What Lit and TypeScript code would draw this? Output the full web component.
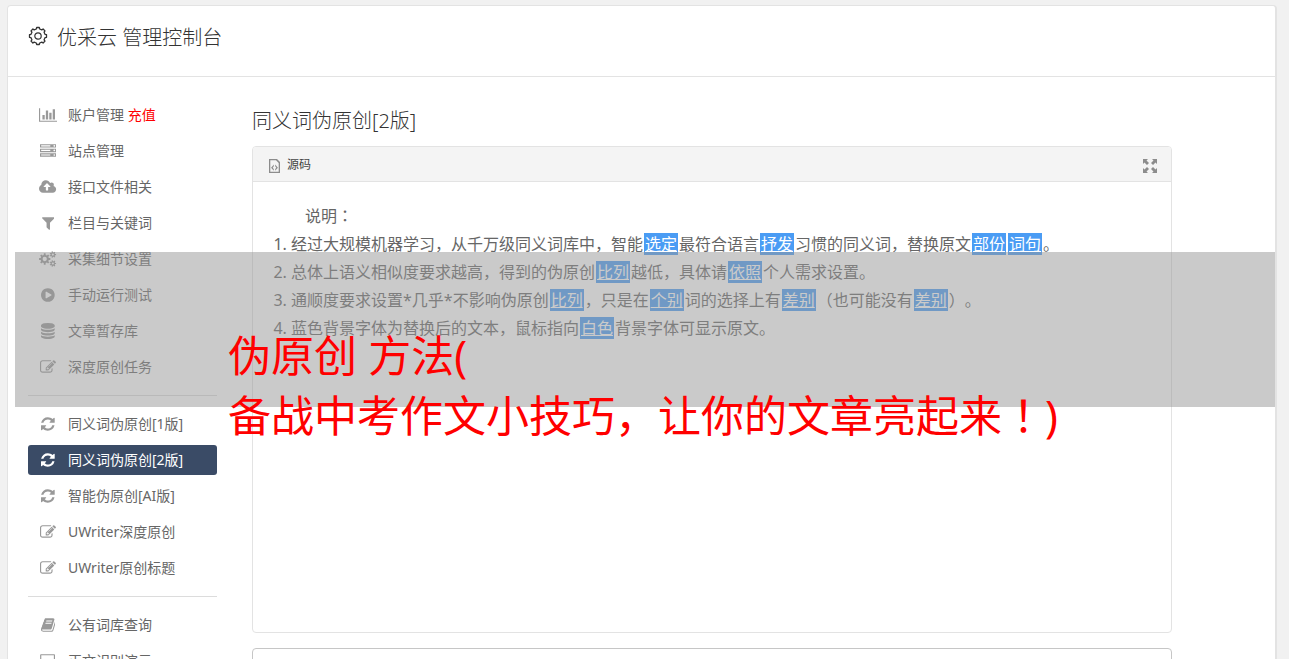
import { LitElement, html, css, svg, nothing } from "lit";
import { customElement, property, state } from "lit/decorators.js";
import { classMap } from "lit/directives/class-map.js";

/** Outline of a cog wheel centred on (cx, cy). */
function cog(cx: number, cy: number, outer: number, inner: number, teeth: number): string {
  const step = (Math.PI * 2) / teeth;
  const point = (r: number, a: number) =>
    `${(cx + r * Math.cos(a)).toFixed(1)} ${(cy + r * Math.sin(a)).toFixed(1)}`;
  const parts: string[] = [];
  for (let i = 0; i < teeth; i++) {
    const a = i * step;
    parts.push(
      point(inner, a - step * 0.3),
      point(outer, a - step * 0.2),
      point(outer, a + step * 0.2),
      point(inner, a + step * 0.3),
    );
  }
  return `M${parts.join("L")}Z`;
}

function disc(cx: number, cy: number, r: number): string {
  return `M${cx - r} ${cy}a${r} ${r} 0 1 0 ${2 * r} 0a${r} ${r} 0 1 0 ${-2 * r} 0z`;
}

const ICONS: Record<string, { x?: number; w: number; d: string }> = {
  chart: {
    w: 2048,
    d: "M640 896v512H384V896h256zm384-512v1024H768V384h256zm1024 1152v128H0V128h128v1408h1920zm-640-896v768h-256V640h256zm384-384v1152h-256V256h256z",
  },
  server: {
    w: 1792,
    d: "M128 1408h1024v-128H128v128zm0-512h1024V768H128v128zm1568 448q0-40-28-68t-68-28-68 28-28 68 28 68 68 28 68-28 28-68zM128 384h1024V256H128v128zm1568 448q0-40-28-68t-68-28-68 28-28 68 28 68 68 28 68-28 28-68zm0-512q0-40-28-68t-68-28-68 28-28 68 28 68 68 28 68-28 28-68zm96 832v384H0v-384h1792zm0-512v384H0V640h1792zm0-512v384H0V128h1792z",
  },
  cloud: {
    x: -64,
    w: 1920,
    d: "M1216 864q0-14-9-23L855 489q-9-9-23-9t-23 9L458 840q-10 12-10 24 0 14 9 23t23 9h224v352q0 13 9.500 22.500t22.500 9.500h192q13 0 22.500-9.500t9.500-22.500V896h224q13 0 22.500-9.500t9.500-22.500zm640 288q0 159-112.500 271.500T1472 1536H384q-185 0-316.500-131.500T-64 1088q0-130 70-240t188-165q-2-30-2-43 0-212 150-362t362-150q156 0 285.500 87T1178 446q71-62 166-62 106 0 181 75t75 181q0 76-41 138 130 31 213.500 135.500T1856 1152z",
  },
  filter: {
    w: 1408,
    d: "M1403 295q17 41-14 70l-493 493v742q0 42-39 59-13 5-25 5-27 0-45-19l-256-256q-19-19-19-45V858L19 365q-31-29-14-70 17-39 59-39h1280q42 0 59 39z",
  },
  cogs: {
    w: 1920,
    d:
      cog(640, 896, 640, 470, 8) + disc(640, 896, 240) +
      cog(1550, 400, 370, 260, 7) + disc(1550, 400, 120) +
      cog(1550, 1400, 370, 260, 7) + disc(1550, 1400, 120),
  },
  play: {
    w: 1536,
    d: "M768 128q209 0 385.500 103T1433 510.500 1536 896t-103 385.500-279.500 279.500T768 1664t-385.500-103T103 1281.500 0 896t103-385.500T382.500 231 768 128zm384 823q32-18 32-55t-32-55L608 521q-31-19-64-1-32 19-32 56v640q0 37 32 56 16 8 32 8 17 0 32-9z",
  },
  database: {
    w: 1536,
    d: "M768 768q237 0 443-43t325-127v170q0 69-103 128t-280 93.500-385 34.500-385-34.500T103 896 0 768V598q119 84 325 127t443 43zm0 768q237 0 443-43t325-127v170q0 69-103 128t-280 93.500-385 34.500-385-34.500T103 1664 0 1536v-170q119 84 325 127t443 43zm0-384q237 0 443-43t325-127v170q0 69-103 128t-280 93.500-385 34.500-385-34.500T103 1280 0 1152V982q119 84 325 127t443 43zM768 0q208 0 385 34.500t280 93.500 103 128v128q0 69-103 128t-280 93.500T768 640t-385-34.500T103 512 0 384V256q0-69 103-128t280-93.500T768 0z",
  },
  edit: {
    w: 1792,
    d: "M888 1184l116-116-152-152-116 116v56h96v96h56zm440-720q-16-16-33 1L945 815q-17 17-1 33t33-1l350-350q17-17 1-33zm80 594v190q0 119-84.500 203.500T1120 1536H288q-119 0-203.500-84.500T0 1248V416q0-119 84.500-203.500T288 128h832q63 0 117 25 15 7 18 23 3 17-9 29l-49 49q-14 14-32 8-23-6-45-6H288q-66 0-113 47t-47 113v832q0 66 47 113t113 47h832q66 0 113-47t47-113v-126q0-13 9-22l64-64q15-15 35-7t20 29zm-96-738l288 288-672 672H640V992zm444 132l-92 92-288-288 92-92q28-28 68-28t68 28l152 152q28 28 28 68t-28 68z",
  },
  refresh: {
    w: 1536,
    d: "M1511 1056q0 5-1 7-64 268-268 434.500T764 1664q-146 0-282.500-55T238 1452l-129 129q-19 19-45 19t-45-19-19-45v-448q0-26 19-45t45-19h448q26 0 45 19t19 45-19 45l-137 137q71 66 161 102t187 36q134 0 250-65t186-179q11-17 53-117 8-23 30-23h192q13 0 22.500 9.500t9.500 22.500zm25-800v448q0 26-19 45t-45 19h-448q-26 0-45-19t-19-45 19-45l138-138Q969 384 768 384q-134 0-250 65T332 628q-11 17-53 117-8 23-30 23H50q-13 0-22.500-9.500T18 736v-7q65-268 270-434.500T768 128q146 0 284 55.500T1297 340l130-129q19-19 45-19t45 19 19 45z",
  },
  book: {
    w: 1664,
    d: "M1639 478q40 57 18 129l-275 906q-19 64-76.500 107.500T1183 1664H260q-77 0-148.500-53.500T12 1479q-24-67-2-127 0-4 3-27t4-37q1-8-3-21.500t-3-19.500q2-11 8-21t16.500-23.500T52 1179q23-38 45-91.500t30-91.500q3-10 .5-30t-.5-28q3-11 17-28t17-23q21-36 42-92t25-90q1-9-2.500-32t.5-28q4-13 22-30.500t22-22.500q19-26 42.500-84.500T340 411q1-8-3-25.500t-2-26.500q2-8 9-18t18-23 17-21q8-12 16.500-30.500t15-35 16-36 19.500-32T469.500 140t36-11.500T553 134l-1 3q38-9 51-9h761q74 0 114 56t18 130l-274 906q-36 119-71.500 153.500T1022 1408H153q-27 0-38 15-11 16-1 43 24 70 144 70h923q29 0 56-15.500t35-41.500l300-987q7-22 5-57 38 15 59 43zm-1064 2q-4 13 2 22.500t20 9.500h608q13 0 25.500-9.500T1247 480l21-64q4-13-2-22.500t-20-9.500H638q-13 0-25.500 9.500T596 416zm-83 256q-4 13 2 22.500t20 9.500h608q13 0 25.500-9.500T1164 736l21-64q4-13-2-22.500t-20-9.500H555q-13 0-25.500 9.500T513 672z",
  },
  laptop: {
    w: 1920,
    d: "M224 128h1472q96 0 96 96v960q0 96-96 96H224q-96 0-96-96V224q0-96 96-96zm32 128v896h1408V256zM0 1408h1920v96q0 64-96 64H96q-96 0-96-64z",
  },
};

interface Entry {
  icon: string;
  label: string;
  tag?: string;
}

const GROUPS: Entry[][] = [
  [
    { icon: "chart", label: "账户管理", tag: "充值" },
    { icon: "server", label: "站点管理" },
    { icon: "cloud", label: "接口文件相关" },
    { icon: "filter", label: "栏目与关键词" },
    { icon: "cogs", label: "采集细节设置" },
    { icon: "play", label: "手动运行测试" },
    { icon: "database", label: "文章暂存库" },
    { icon: "edit", label: "深度原创任务" },
  ],
  [
    { icon: "refresh", label: "同义词伪原创[1版]" },
    { icon: "refresh", label: "同义词伪原创[2版]" },
    { icon: "refresh", label: "智能伪原创[AI版]" },
    { icon: "edit", label: "UWriter深度原创" },
    { icon: "edit", label: "UWriter原创标题" },
  ],
  [
    { icon: "book", label: "公有词库查询" },
    { icon: "laptop", label: "正文识别演示" },
  ],
];

/** Each note is plain text; words in braces are replaced synonyms. */
const NOTES = [
  "经过大规模机器学习，从千万级同义词库中，智能{选定}最符合语言{抒发}习惯的同义词，替换原文{部份}{词句}。",
  "总体上语义相似度要求越高，得到的伪原创{比列}越低，具体请{依照}个人需求设置。",
  "通顺度要求设置*几乎*不影响伪原创{比列}，只是在{个别}词的选择上有{差别}（也可能没有{差别}）。",
  "蓝色背景字体为替换后的文本，鼠标指向{白色}背景字体可显示原文。",
];

const centredMarks = css`
  .mark {
    font-family: "Noto Sans CJK TC", sans-serif;
    line-height: 1;
  }
`;

/** Full-width colons and exclamation marks use the face that centres them. */
function punctuate(text: string) {
  return text
    .split(/([：！])/)
    .filter(Boolean)
    .map((s) => (/^[：！]$/.test(s) ? html`<span class="mark">${s}</span>` : s));
}

@customElement("side-nav")
export class SideNav extends LitElement {
  @state() private current = "同义词伪原创[2版]";

  static styles = css`
    :host {
      display: block;
    }
    nav,
    ul {
      display: flex;
      flex-direction: column;
      gap: 6px;
    }
    ul {
      margin: 0;
      padding: 0;
      list-style: none;
    }
    hr {
      width: 100%;
      height: 1px;
      margin: 7px 0;
      border: 0;
      background: #dcdcdc;
    }
    .link {
      display: flex;
      align-items: center;
      gap: 10px;
      height: 30px;
      padding: 0 10px;
      border-radius: 3px;
      color: #666;
      font-size: 14px;
      line-height: 30px;
      text-decoration: none;
      white-space: nowrap;
    }
    .icon {
      display: flex;
      justify-content: center;
      width: 20px;
      color: #999;
    }
    .icon svg {
      flex: none;
      height: 16px;
      fill: currentColor;
      fill-rule: evenodd;
    }
    .tag {
      color: #f00;
    }
    .active,
    .active .icon {
      color: #fff;
    }
    .active {
      background: #3a4b66;
    }
  `;

  private pick(event: Event, label: string) {
    event.preventDefault();
    this.current = label;
  }

  private entry(e: Entry) {
    const { x = 0, w, d } = ICONS[e.icon];
    return html`<li>
      <a
        class=${classMap({ link: true, active: e.label === this.current })}
        href="#"
        @click=${(ev: Event) => this.pick(ev, e.label)}
      >
        <span class="icon">
          <svg viewBox="${x} 0 ${w} 1792" aria-hidden="true">${svg`<path d=${d} />`}</svg>
        </span>
        <span>${e.label}${e.tag ? html` <span class="tag">${e.tag}</span>` : nothing}</span>
      </a>
    </li>`;
  }

  render() {
    return html`<nav>
      ${GROUPS.map(
        (group, i) => html`${i ? html`<hr />` : nothing}
          <ul>
            ${group.map((e) => this.entry(e))}
          </ul>`,
      )}
    </nav>`;
  }
}

@customElement("source-editor")
export class SourceEditor extends LitElement {
  @property({ type: Array }) notes: string[] = [];

  static styles = [
    centredMarks,
    css`
      :host {
        display: block;
        border: 1px solid #e3e3e3;
        border-radius: 4px;
        background: #fff;
      }
      .bar {
        display: flex;
        align-items: center;
        justify-content: space-between;
        height: 32px;
        padding: 2px 14px 0 15px;
        border-bottom: 1px solid #e3e3e3;
        border-radius: 3px 3px 0 0;
        background: #f4f4f4;
      }
      button {
        display: flex;
        align-items: center;
        gap: 5px;
        padding: 0;
        border: 0;
        background: none;
        color: #444;
        font: inherit;
        font-size: 12px;
        line-height: 20px;
        cursor: pointer;
      }
      button svg {
        display: block;
        margin-top: 2px;
        fill: #8c8c8c;
      }
      .body {
        box-sizing: border-box;
        min-height: 450px;
        padding: 20px;
        color: #666;
        font-size: 16px;
        line-height: 28px;
        text-spacing-trim: space-all;
      }
      p {
        margin: 0;
        text-indent: 2em;
      }
      ol {
        margin: 0;
        padding-left: 18px;
      }
      .swap {
        margin: 0 1px;
        padding: 0 1px;
        background: #4a9cf4;
        color: #fff;
        text-decoration: underline;
      }
    `,
  ];

  private note(text: string) {
    return text
      .split(/(\{[^}]*\})/)
      .filter(Boolean)
      .map((s) =>
        s.startsWith("{") ? html`<a class="swap" href="#">${s.slice(1, -1)}</a>` : punctuate(s),
      );
  }

  render() {
    return html`
      <div class="bar">
        <button type="button">
          <svg width="14" height="14" viewBox="0 0 14 14" aria-hidden="true">
            <path fill-rule="evenodd" d="M1 0h8l3 3v11H1zM2.300 1.300v11.400h8.400V4L8 1.300z" />
            <path d="M5.800 5.600v1.700L4.700 8.700l1.100 1.300v1.700L3.100 8.700zM7.200 5.600v1.700l1.100 1.400-1.100 1.300v1.700l2.700-3z" />
          </svg>
          源码
        </button>
        <button type="button" aria-label="全屏">
          <svg width="14" height="14" viewBox="0 0 14 14" aria-hidden="true">
            <path
              d="M0 0h5L3.500 1.500 6 4 4 6 1.500 3.500 0 5zM14 0v5l-1.500-1.500L10 6 8 4l2.500-2.500L9 0zM0 14V9l1.500 1.500L4 8l2 2-2.500 2.500L5 14zM14 14H9l1.500-1.500L8 10l2-2 2.500 2.500L14 9z"
            />
          </svg>
        </button>
      </div>
      <div class="body">
        <p>${punctuate("说明：")}</p>
        <ol>
          ${this.notes.map((n) => html`<li>${this.note(n)}</li>`)}
        </ol>
      </div>
    `;
  }
}

@customElement("app-root")
export class AppRoot extends LitElement {
  static styles = [
    centredMarks,
    css`
      :host {
        display: block;
        position: relative;
        box-sizing: border-box;
        height: 100vh;
        padding: 5px 12px 0 7px;
        overflow: hidden;
        background: #f1f1f1;
        color: #333;
        font-family: "Noto Sans", "Noto Sans CJK SC", sans-serif;
      }
      .panel {
        border: 1px solid #e3e3e3;
        border-right-width: 2px;
        border-radius: 4px;
        background: #fff;
      }
      header {
        display: flex;
        align-items: center;
        gap: 9px;
        padding: 16px 20px 23px;
        border-bottom: 1px solid #e3e3e3;
      }
      header svg {
        flex: none;
        margin-bottom: 3px;
        fill: none;
        stroke: #333;
      }
      h1,
      h2 {
        margin: 0;
        font-size: 20px;
        font-weight: 300;
        line-height: 31px;
      }
      .columns {
        display: grid;
        grid-template-columns: 189px minmax(0, 1fr);
        gap: 35px;
        padding: 23px 103px 23px 20px;
      }
      main {
        display: flex;
        flex-direction: column;
        padding-top: 5px;
      }
      source-editor {
        margin: 10px 0 15px;
      }
      .result {
        box-sizing: border-box;
        width: 100%;
        height: 120px;
        border: 1px solid #c6c6c6;
        border-radius: 4px;
        resize: none;
      }
      .banner {
        position: absolute;
        top: 252px;
        right: 14px;
        left: 15px;
        box-sizing: border-box;
        height: 155px;
        padding: 74px 0 0 213px;
        background: rgba(150, 150, 150, 0.5);
        color: #f00;
        font-size: 43px;
        line-height: 60px;
        white-space: nowrap;
        pointer-events: none;
      }
    `,
  ];

  render() {
    return html`
      <div class="panel">
        <header>
          <svg width="20" height="20" viewBox="0 0 20 20" aria-hidden="true">
            <path d=${cog(10, 10, 8.600, 7.200, 8)} stroke-width="1.300" stroke-linejoin="round" />
            <circle cx="10" cy="10" r="3.200" stroke-width="1.200" />
          </svg>
          <h1>优采云 管理控制台</h1>
        </header>
        <div class="columns">
          <side-nav></side-nav>
          <main>
            <h2>同义词伪原创[2版]</h2>
            <source-editor .notes=${NOTES}></source-editor>
            <textarea class="result" aria-label="结果"></textarea>
          </main>
        </div>
      </div>
      <div class="banner">
        <div>伪原创 方法(</div>
        <div>${punctuate("备战中考作文小技巧，让你的文章亮起来！)")}</div>
      </div>
    `;
  }
}
